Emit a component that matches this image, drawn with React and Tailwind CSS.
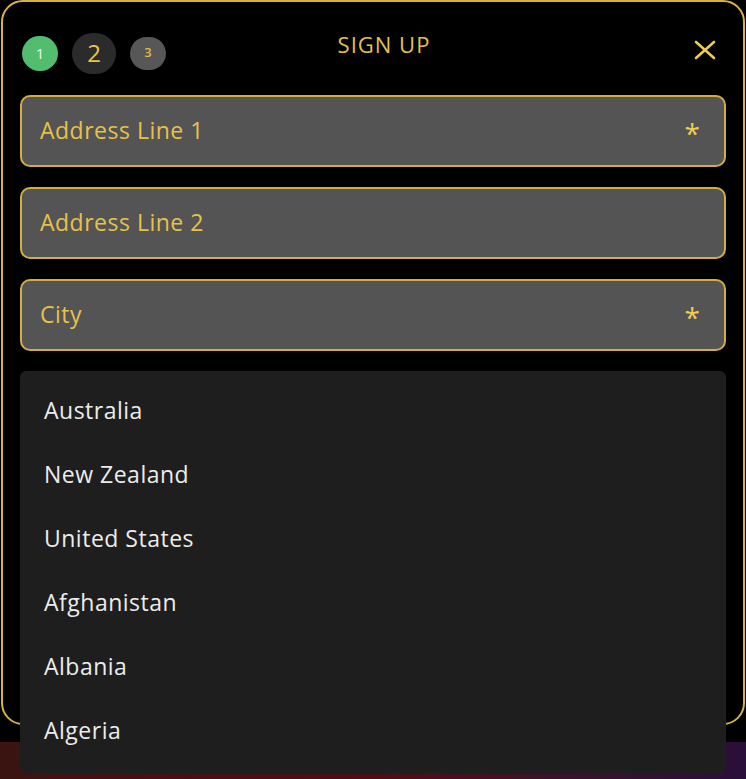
import React from "react";

const fields = [
  { label: "Address Line 1", required: true },
  { label: "Address Line 2", required: false },
  { label: "City", required: true },
];

const countries = ["Australia", "New Zealand", "United States", "Afghanistan", "Albania", "Algeria"];

const StepDot = ({ n, active, done }) => {
  if (done) {
    return (
      <div className="w-[36px] h-[35px] rounded-full bg-[#52bd6e] flex items-center justify-center text-[15px] text-[#eaf7ee]">
        {n}
      </div>
    );
  }
  if (active) {
    return (
      <div className="w-[44px] h-[41px] rounded-full bg-[#2b2b2b] flex items-center justify-center text-[24px] text-[#e8c44c]">
        {n}
      </div>
    );
  }
  return (
    <div className="w-[36px] h-[33px] rounded-full bg-[#575757] flex items-center justify-center text-[13px] font-semibold text-[#e0b84a]">
      {n}
    </div>
  );
};

const App = () => {
  return (
    <div
      className="relative w-[746px] h-[779px] overflow-hidden bg-black"
      style={{ fontFamily: '"Open Sans", "Noto Sans", sans-serif' }}
    >
      {/* Backdrop strip under the modal */}
      <div className="absolute left-0 right-0 bottom-0 h-[37px] bg-gradient-to-r from-[#3a1410] via-[#4a0f14] to-[#2a0f3a]" />

      {/* Modal */}
      <div className="relative ml-[1px] w-[744px] h-[725px] rounded-[22px] border-2 border-[#d6b341] bg-black px-[17px] pt-[31px]">
        {/* Header */}
        <div className="flex items-center h-[40px]">
          <div className="w-[146px] flex items-center gap-[14px] pl-[2px]">
            <StepDot n={1} done />
            <StepDot n={2} active />
            <StepDot n={3} />
          </div>
          <div className="flex-1 text-center pl-[22px] text-[22px] tracking-[1px] text-[#e3c04a] -mt-[17px]">
            SIGN UP
          </div>
          <div className="w-[146px] flex justify-end pr-[10px] -mt-[6px]">
            <svg width="22" height="20" viewBox="0 0 22 20" fill="none" stroke="#f0cc4a" strokeWidth="2.6" strokeLinecap="round">
              <path d="M2 2 L20 18 M20 2 L2 18" />
            </svg>
          </div>
        </div>

        {/* Fields */}
        <div className="mt-[22px] flex flex-col gap-[20px]">
          {fields.map((f) => (
            <div
              key={f.label}
              className="h-[72px] rounded-[10px] border-2 border-[#d2ae3e] bg-[#545454] flex items-center justify-between pl-[18px] pr-[24px]"
            >
              <span className="text-[23px] tracking-[0.5px] text-[#e6c24c] -mt-[2px]">{f.label}</span>
              {f.required && <span className="text-[28px] leading-none mt-[4px] text-[#f0cc4a]">*</span>}
            </div>
          ))}
        </div>
      </div>

      {/* Country dropdown */}
      <div className="absolute left-[20px] top-[371px] w-[706px] h-[402px] rounded-[6px] bg-[#1e1e1e] pt-[7px]">
        {countries.map((c) => (
          <div key={c} className="h-[64px] flex items-center pl-[24px] text-[23px] tracking-[0.5px] text-[#ececec]">
            {c}
          </div>
        ))}
      </div>
    </div>
  );
};

export default App;
